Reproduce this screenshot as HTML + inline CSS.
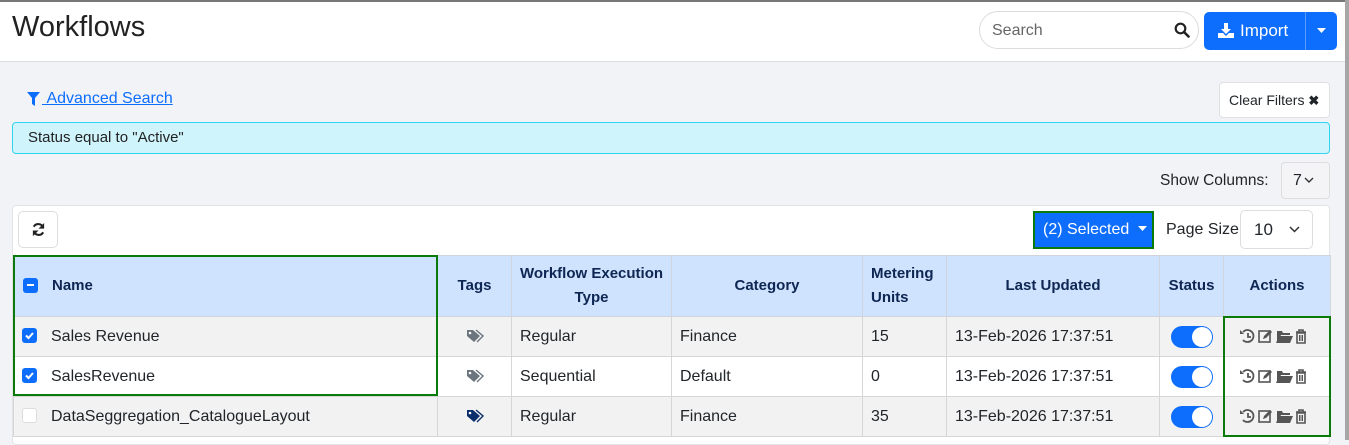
<!DOCTYPE html>
<html><head><meta charset="utf-8"><style>
*{box-sizing:border-box;margin:0;padding:0}
body{width:1349px;height:440px;overflow:hidden;background:#f2f3f7;font-family:"Liberation Sans",Arial,sans-serif;color:#212529;position:relative}
.a{position:absolute;white-space:nowrap}
.top{left:0;top:0;width:1349px;height:62px;background:#fff;border-bottom:1px solid #dcdde2;border-top:2px solid #777}
.sb{right:0;top:0;width:4px;height:440px;background:#a6a6a6}
h1{position:absolute;left:12px;top:11px;font-size:29px;font-weight:400;color:#222}
.search{left:979px;top:11px;width:220px;height:38px;border:1px solid #dcdcdc;border-radius:19px;background:#fff;font-size:16px;color:#666;padding:10px 12px}
.imp{left:1204px;top:12px;width:133px;height:38px;background:#0d6efd;border-radius:5px;color:#fff;font-size:17px}
.tw{left:12px;top:205px;width:1318px;height:240px;background:#fff;border:1px solid #e3e3e6;border-radius:4px}
table{position:absolute;left:13px;top:255px;border-collapse:collapse;font-size:16px}
th{background:#cfe2fe;color:#0e2652;font-size:15px;font-weight:700;height:61px;border:1px solid #d0d4dc;line-height:24px}
td{height:40px;border:1px solid #d6d6d6;padding:0 8px;white-space:nowrap}
tr.g td{background:#f2f2f2}
tr.w td{background:#fff}
.cb{display:inline-block;width:15px;height:15px;border-radius:3px;vertical-align:-2px;margin-right:14px;position:relative}
.on{background:#0d6efd}
.off{background:#fff;border:1px solid #ddd}
.tog{display:inline-block;width:42px;height:22px;border-radius:11px;background:#0d6efd;position:relative;vertical-align:middle}
.tog:after{content:"";position:absolute;right:1px;top:1px;width:20px;height:20px;border-radius:50%;background:#fff}
.gb{border:2px solid #0a7a0a}
</style></head><body>
<div class="a top"></div>
<div class="a sb"></div>
<h1>Workflows</h1>
<div class="a search">Search
<svg class="a" style="left:194px;top:10px" width="16" height="16" viewBox="0 0 16 16"><circle cx="6.5" cy="6.5" r="4.8" fill="none" stroke="#222" stroke-width="2.2"/><path d="M10 10l4.5 4.5" stroke="#222" stroke-width="2.6" stroke-linecap="round"/></svg></div>
<div class="a imp"><svg class="a" style="left:14px;top:11px" width="16" height="15" viewBox="0 0 16 15"><path d="M6 0h4v6h3l-5 5-5-5h3z M0 10h5l3 3 3-3h5v5H0z" fill="#fff"/></svg><span class="a" style="left:36px;top:9px">Import</span><span class="a" style="left:101px;top:0;width:1px;height:38px;background:#5a9cfd"></span><svg class="a" style="left:113px;top:16px" width="9" height="5"><path d="M0 0h9L4.5 5z" fill="#fff"/></svg></div>

<svg class="a" style="left:27px;top:92px" width="13" height="14" viewBox="0 0 13 14"><path d="M0 0h13L8 6v8L5 12V6z" fill="#0d6efd"/></svg>
<span class="a" style="left:42px;top:90px;font-size:16px;color:#0d6efd;text-decoration:underline">&nbsp;Advanced Search</span>
<div class="a" style="left:1219px;top:82px;width:111px;height:36px;background:#fff;border:1px solid #e0e0e0;border-radius:4px;font-size:14px;padding:9px 9px">Clear Filters <b style="font-size:13px">✖</b></div>
<div class="a" style="left:12px;top:122px;width:1318px;height:32px;background:#cff4fc;border:1px solid #2fd4f0;border-radius:4px;font-size:15px;padding:6px 15px;color:#222">Status equal to "Active"</div>
<span class="a" style="left:1160px;top:172px;font-size:15.5px">Show Columns:</span>
<div class="a" style="left:1281px;top:162px;width:49px;height:37px;border:1px solid #ddd;border-radius:4px;font-size:16px;padding:9px 11px;background:#f4f4f6">7<svg width="10" height="6" style="margin-left:2px;vertical-align:2px"><path d="M1 1l4 4 4-4" fill="none" stroke="#333" stroke-width="1.4"/></svg></div>

<div class="a tw"></div>
<div class="a" style="left:18px;top:211px;width:40px;height:37px;border:1px solid #ddd;border-radius:5px;background:#fff"><svg class="a" style="left:12px;top:10px" width="15" height="15" viewBox="0 0 16 16"><path d="M13 6A5.5 5.5 0 0 0 3 5M3 10a5.5 5.5 0 0 0 10 1" fill="none" stroke="#222" stroke-width="2.2"/><path d="M14 1v6H8z M2 15V9h6z" fill="#222"/></svg></div>
<div class="a gb" style="left:1033px;top:211px;width:121px;height:38px;background:#0d6efd;color:#fff;font-size:16px;padding:8px 8px">(2) Selected <svg width="9" height="5" style="margin-left:4px;vertical-align:3px"><path d="M0 0h9L4.5 5z" fill="#fff"/></svg></div>
<span class="a" style="left:1166px;top:221px;font-size:16px">Page Size</span>
<div class="a" style="left:1240px;top:210px;width:73px;height:39px;border:1px solid #ddd;border-radius:5px;background:#fff;font-size:17px;padding:9px 13px">10<svg width="11" height="7" style="margin-left:16px;vertical-align:2px"><path d="M1 1l4.5 4.5 4.5-4.5" fill="none" stroke="#333" stroke-width="1.5"/></svg></div>

<table>
<tr><th style="width:424px;text-align:left;padding-left:9px"><span class="cb on" style="vertical-align:-3px"><span class="a" style="left:4px;top:6px;width:7px;height:2px;background:#fff"></span></span>Name</th><th style="width:74px">Tags</th><th style="width:160px">Workflow Execution<br>Type</th><th style="width:191px">Category</th><th style="width:84px;text-align:left;padding-left:8px">Metering<br>Units</th><th style="width:213px">Last Updated</th><th style="width:64px">Status</th><th style="width:107px">Actions</th></tr>
<tr class="g"><td><span class="cb on">CHK</span>Sales Revenue</td><td style="text-align:center">TAG1</td><td>Regular</td><td>Finance</td><td>15</td><td>13-Feb-2026 17:37:51</td><td style="text-align:center"><span class="tog"></span></td><td>ACT</td></tr>
<tr class="w"><td><span class="cb on">CHK</span>SalesRevenue</td><td style="text-align:center">TAG1</td><td>Sequential</td><td>Default</td><td>0</td><td>13-Feb-2026 17:37:51</td><td style="text-align:center"><span class="tog"></span></td><td>ACT</td></tr>
<tr class="g"><td><span class="cb off"></span>DataSeggregation_CatalogueLayout</td><td style="text-align:center">TAG2</td><td>Regular</td><td>Finance</td><td>35</td><td>13-Feb-2026 17:37:51</td><td style="text-align:center"><span class="tog"></span></td><td>ACT</td></tr>
</table>
<div class="a gb" style="left:13px;top:255px;width:425px;height:141px"></div>
<div class="a gb" style="left:1223px;top:316px;width:108px;height:121px"></div>
<script>
var tag=function(c){return '<svg width="18" height="14" viewBox="0 0 18 14" style="vertical-align:middle"><path d="M1 1h6l7 6-6 6-7-6z" fill="'+c+'"/><path d="M10 1l7 6-6 6" fill="none" stroke="'+c+'" stroke-width="1.4"/><circle cx="4" cy="4" r="1.3" fill="#fff"/></svg>';};
var act='<svg width="70" height="16" viewBox="0 0 70 16" style="vertical-align:middle;margin-left:8px"><g fill="none" stroke="#555" stroke-width="1.8"><path d="M3 4a6 6 0 1 1 0 8"/><path d="M8 5v4h3"/></g><path d="M0 2l4 4H0z" fill="#555"/><rect x="19" y="3" width="11" height="11" fill="none" stroke="#555" stroke-width="1.6"/><path d="M23 11l1-3 6-6 2 2-6 6z" fill="#555"/><path d="M37 3h5l1 2h7v2H41l-3 7h-1z M39 8h14l-3 7H36z" fill="#555"/><path d="M56 4h10M59 4V2h4v2M57 5h8v10h-8z" fill="none" stroke="#555" stroke-width="1.6"/><path d="M59.5 7v6M61 7v6M62.5 7v6" stroke="#555"/></svg>';
var chk='<svg width="15" height="15" viewBox="0 0 15 15" style="position:absolute;left:0;top:0"><path d="M4 7.5l2.5 2.5 4.5-5" fill="none" stroke="#fff" stroke-width="2"/></svg>';
document.querySelectorAll('td').forEach(function(t){if(t.textContent=='TAG1')t.innerHTML=tag('#6c757d');else if(t.textContent=='TAG2')t.innerHTML=tag('#0b2f6b');else if(t.textContent=='ACT')t.innerHTML=act;});
document.querySelectorAll('.cb').forEach(function(c){if(c.textContent=='CHK')c.innerHTML=chk;});
</script>
</body></html>
